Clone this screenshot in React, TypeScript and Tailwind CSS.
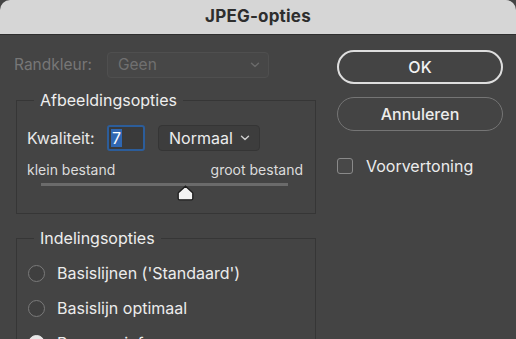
import { useState } from 'react';

function Chevron({ color = '#cfcfcf' }: { color?: string }) {
  return (
    <svg width="10" height="6" viewBox="0 0 10 6" fill="none">
      <path d="M1.5 1.2 L5 4.6 L8.5 1.2" stroke={color} strokeWidth="1.4" strokeLinecap="round" strokeLinejoin="round" />
    </svg>
  );
}

function Thumb() {
  return (
    <svg width="17" height="16" viewBox="0 0 17 16">
      <path
        d="M8.5 1.2 L15.4 7.4 Q15.8 7.8 15.8 8.4 L15.8 13.4 Q15.8 14.8 14.4 14.8 L2.6 14.8 Q1.2 14.8 1.2 13.4 L1.2 8.4 Q1.2 7.8 1.6 7.4 Z"
        fill="#f4f4f4"
        stroke="#1e1e1e"
        strokeWidth="1.3"
      />
    </svg>
  );
}

function Radio({ label, checked }: { label: string; checked?: boolean }) {
  return (
    <div className="flex items-center h-[20px]">
      <span
        className={
          checked
            ? 'w-[17px] h-[17px] rounded-full bg-[#e8e8e8] border border-[#e8e8e8]'
            : 'w-[17px] h-[17px] rounded-full bg-[#3f3f3f] border border-[#7a7a7a]'
        }
      />
      <span className="ml-[12px] text-[16px] text-[#ececec]">{label}</span>
    </div>
  );
}

export default function App() {
  const [preview, setPreview] = useState(false);

  return (
    <div className="w-[516px] h-[339px] overflow-hidden bg-[#444444] font-['Inter','Liberation_Sans',sans-serif]">
      {/* title bar */}
      <div className="h-[35px] bg-[#d6d6d6] rounded-t-[10px] flex items-center justify-center border-b border-[#2f2f2f]">
        <span className="text-[17px] font-bold text-[#2e2e2e] tracking-[0.2px]">JPEG-opties</span>
      </div>

      <div className="flex">
        {/* left column */}
        <div className="w-[316px] pt-[17px]">
          <div className="flex items-center pl-[14px] h-[26px]">
            <span className="text-[15.5px] text-[#777777] w-[93px]">Randkleur:</span>
            <div className="w-[162px] h-[26px] flex items-center justify-between pl-[10px] pr-[8px] bg-[#474747] border border-[#4f4f4f] rounded-[4px]">
              <span className="text-[15.5px] text-[#707070]">Geen</span>
              <Chevron color="#6a6a6a" />
            </div>
          </div>

          {/* Afbeeldingsopties */}
          <fieldset className="ml-[16px] mt-[12px] w-[300px] h-[124px] border border-[#363636] pl-[10px] pr-[12px]">
            <legend className="ml-[7px] px-[6px] text-[16px] leading-[20px] text-[#eeeeee]">Afbeeldingsopties</legend>
            <div className="flex items-center mt-[15px] h-[26px]">
              <span className="text-[16px] text-[#e8e8e8] w-[80px]">Kwaliteit:</span>
              <div className="w-[38px] h-[26px] border-[2px] border-[#2c5d9a] rounded-[3px] bg-[#3a3a3a] flex items-center pl-[2px]">
                <span className="bg-[#2f67b2] text-[16px] leading-[18px] text-white px-[1px]">7</span>
              </div>
              <div className="ml-[13px] w-[102px] h-[26px] flex items-center justify-between pl-[10px] pr-[9px] bg-[#3d3d3d] border border-[#353535] rounded-[4px]">
                <span className="text-[16px] text-[#ececec]">Normaal</span>
                <Chevron />
              </div>
            </div>
            <div className="flex justify-between mt-[10px] text-[14px] leading-[18px] text-[#dcdcdc]">
              <span>klein bestand</span>
              <span>groot bestand</span>
            </div>
            <div className="relative ml-[14px] mt-[4px] w-[247px] h-[3px] bg-[#6b6b6b]">
              <div className="absolute left-[136px] top-[2px]">
                <Thumb />
              </div>
            </div>
          </fieldset>

          {/* Indelingsopties */}
          <fieldset className="ml-[16px] mt-[14px] w-[300px] h-[140px] border border-[#363636] pl-[11px]">
            <legend className="ml-[6px] px-[6px] text-[16px] leading-[20px] text-[#eeeeee]">Indelingsopties</legend>
            <div className="mt-[15px] flex flex-col gap-[15px]">
              <Radio label="Basislijnen ('Standaard')" />
              <Radio label="Basislijn optimaal" />
              <Radio label="Progressief" checked />
            </div>
          </fieldset>
        </div>

        {/* right column */}
        <div className="pl-[21px] pt-[15px] flex flex-col">
          <button className="w-[166px] h-[34px] rounded-full border-[2px] border-[#dedede] text-[16px] font-medium text-[#f2f2f2]">
            OK
          </button>
          <button className="mt-[13px] w-[166px] h-[34px] rounded-full border-[1.5px] border-[#757575] text-[16px] font-medium text-[#ececec]">
            Annuleren
          </button>
          <label className="mt-[23px] flex items-center cursor-pointer" onClick={() => setPreview(!preview)}>
            <span className="w-[16px] h-[16px] rounded-[3px] border border-[#8a8a8a] bg-[#484848]" />
            <span className="ml-[13px] text-[16px] text-[#ececec]">Voorvertoning</span>
          </label>
        </div>
      </div>
    </div>
  );
}
